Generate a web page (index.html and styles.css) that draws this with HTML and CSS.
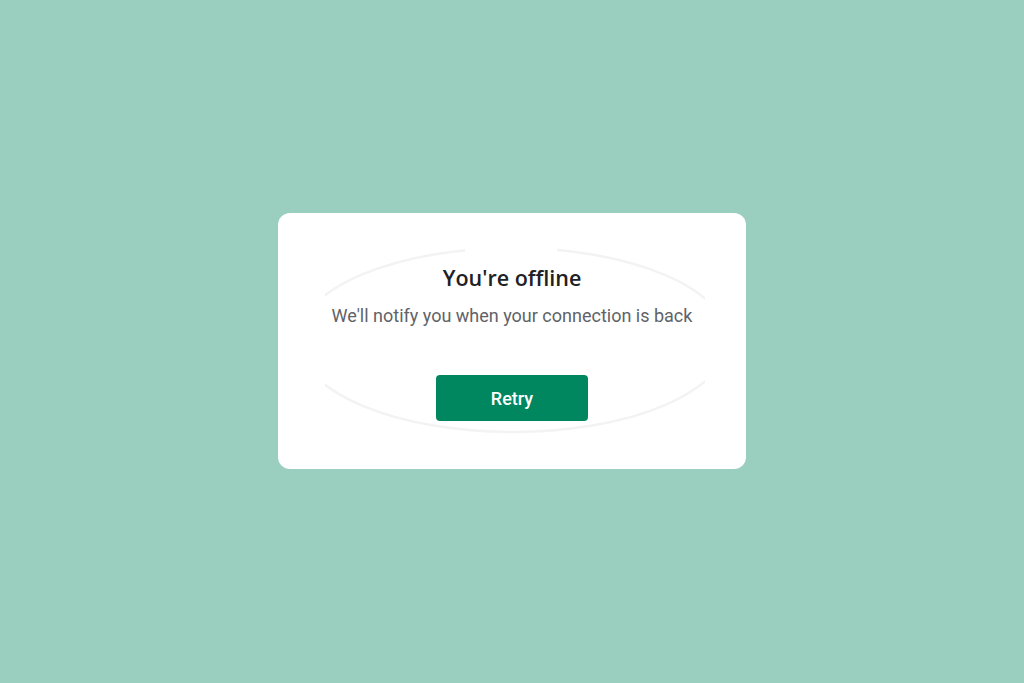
FILE: index.html
```html
<!DOCTYPE html>
<html lang="en">
<head>
<meta charset="utf-8">
<title>You're offline</title>
<link rel="stylesheet" href="styles.css">
</head>
<body>
<main class="stage">
  <section class="card">
    <svg class="halo" width="380" height="200" viewBox="0 0 380 200" aria-hidden="true">
      <ellipse cx="188" cy="94" rx="215" ry="92" fill="none" stroke="#f3f3f3" stroke-width="2.5"/>
      <rect x="140" y="0" width="92" height="20" fill="#ffffff"/>
    </svg>
    <h1 class="title">You're offline</h1>
    <p class="message">We'll notify you when your connection is back</p>
    <button class="retry" type="button">Retry</button>
  </section>
</main>
</body>
</html>
```
FILE: styles.css
```css
html, body {
  margin: 0;
  padding: 0;
  height: 100%;
}
body {
  background: #9acfc0;
  font-family: Roboto, "Liberation Sans", sans-serif;
}
.stage {
  height: 100%;
  box-sizing: border-box;
  padding-bottom: 1px;
  display: flex;
  align-items: center;
  justify-content: center;
}
.card {
  position: relative;
  width: 468px;
  height: 256px;
  box-sizing: border-box;
  background: #ffffff;
  border-radius: 12px;
  padding-top: 51px;
  display: flex;
  flex-direction: column;
  align-items: center;
}
.halo {
  position: absolute;
  left: 47px;
  top: 33px;
  filter: blur(0.6px);
}
.title {
  position: relative;
  margin: 0;
  font-family: "Open Sans", sans-serif;
  font-weight: 600;
  font-size: 21.5px;
  line-height: 28px;
  color: #202124;
}
.message {
  position: relative;
  margin: 12px 0 0;
  font-family: Roboto, sans-serif;
  font-size: 18px;
  line-height: 24px;
  color: #5f6368;
}
.retry {
  position: relative;
  margin-top: 47px;
  width: 152px;
  height: 46px;
  border: none;
  border-radius: 4px;
  background: #01875f;
  color: #ffffff;
  font-family: Roboto, sans-serif;
  font-weight: 500;
  font-size: 18px;
  padding: 0;
}
```
